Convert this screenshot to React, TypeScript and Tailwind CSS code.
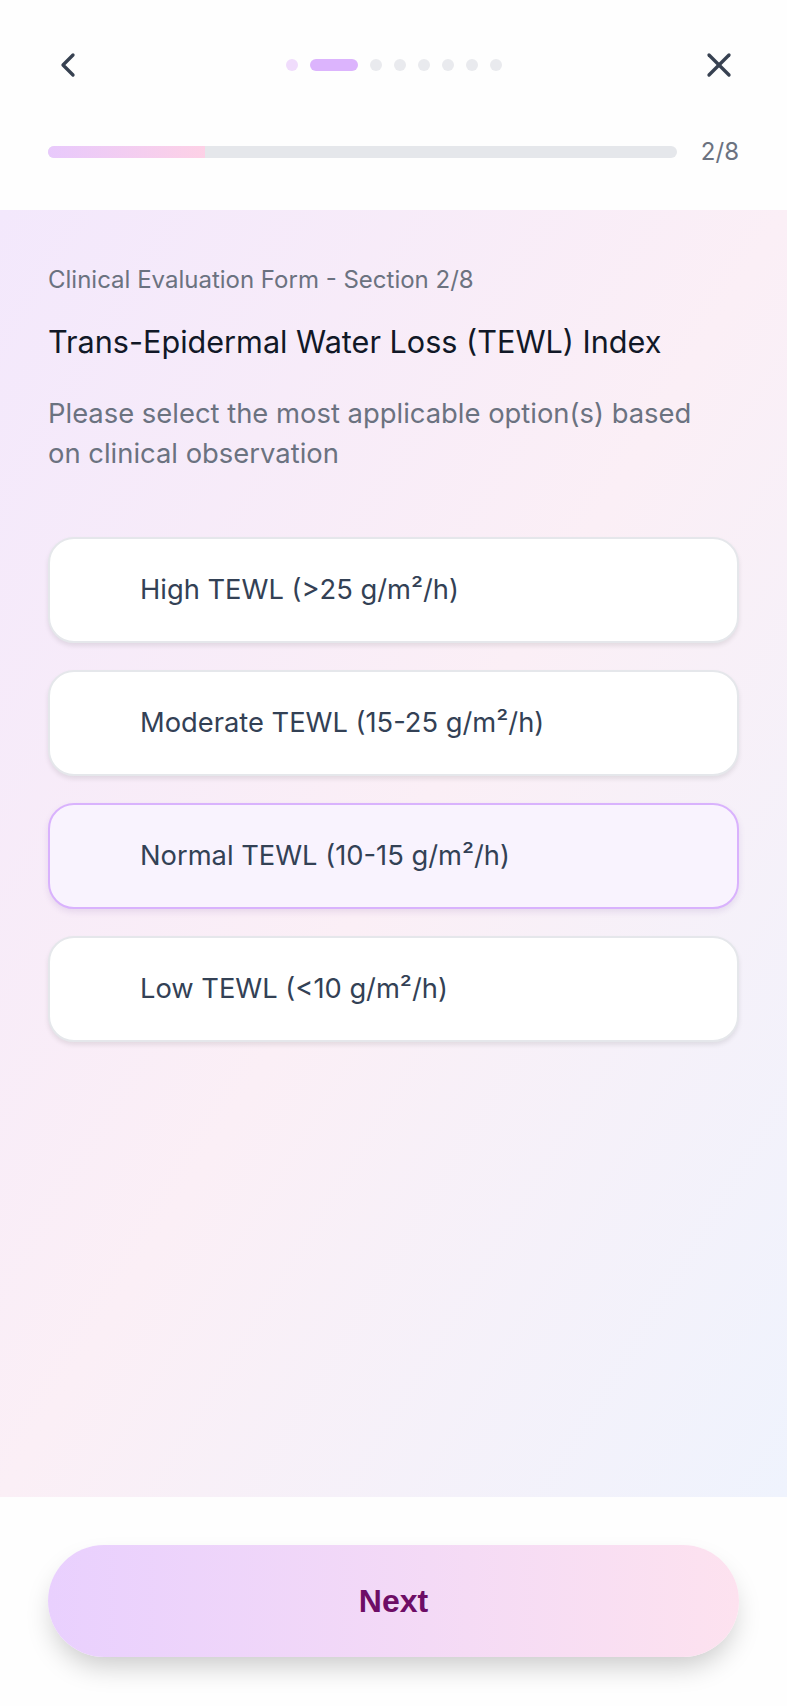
import { useState } from 'react';
import { ChevronLeft, X } from 'lucide-react';

const options = [
    'High TEWL (>25 g/m²/h)',
    'Moderate TEWL (15-25 g/m²/h)',
    'Normal TEWL (10-15 g/m²/h)',
    'Low TEWL (<10 g/m²/h)',
];

export default function App() {
    const [selected, setSelected] = useState<number>(2);
    const step = 2;
    const total = 8;

    return (
        <div className="w-full h-[1706px] flex flex-col font-['Inter',_'Noto_Sans',sans-serif] bg-white">
            {/* header */}
            <div className="h-[210px] shrink-0 bg-[#fefefe] px-12 pt-[45px]">
                <div className="h-10 flex items-center justify-between">
                    <button className="w-10 h-10 text-[#374151]">
                        <ChevronLeft size={40} strokeWidth={2} />
                    </button>
                    <div className="flex items-center gap-3">
                        {Array.from({ length: total }).map((_, i) => {
                            if (i === step - 1) {
                                return <div key={i} className="w-12 h-3 rounded-full bg-[#dcb4fd]" />;
                            }
                            return (
                                <div
                                    key={i}
                                    className={`w-3 h-3 rounded-full ${i < step - 1 ? 'bg-[#f0dcfc]' : 'bg-[#e9eaee]'}`}
                                />
                            );
                        })}
                    </div>
                    <button className="w-10 h-10 text-[#374151]">
                        <X size={40} strokeWidth={2} />
                    </button>
                </div>
                <div className="mt-[53px] h-7 flex items-center gap-6">
                    <div className="flex-1 h-3 rounded-full bg-[#e5e7eb] overflow-hidden">
                        <div
                            className="h-full bg-gradient-to-r from-[#e8c9fc] to-[#fdd1e6]"
                            style={{ width: `${(step / total) * 100}%` }}
                        />
                    </div>
                    <span className="text-[24px] leading-7 text-[#6b7280]">{step}/{total}</span>
                </div>
            </div>

            {/* body */}
            <div className="flex-1 bg-gradient-to-br from-[#f3e8fc] via-[#fbeff6] to-[#eff3fd] px-12 pt-[54px]">
                <p className="text-[24px] leading-8 text-[#6b7280]">Clinical Evaluation Form - Section 2/8</p>
                <h1 className="mt-[26px] text-[30.6px] leading-10 text-[#111827]">
                    Trans-Epidermal Water Loss (TEWL) Index
                </h1>
                <p className="mt-[31px] max-w-[660px] text-[27.4px] leading-10 text-[#6b7280]">
                    Please select the most applicable option(s) based on clinical observation
                </p>

                <div className="mt-16 flex flex-col gap-[27px]">
                    {options.map((opt, i) => (
                        <button
                            key={opt}
                            onClick={() => setSelected(i)}
                            className={`h-[106px] w-full flex items-center pl-[90px] rounded-[26px] border-2 text-left text-[27.3px] text-[#334155] ${selected === i
                                ? 'border-[#d9b2fd] bg-[#f9f3fe] shadow-[0_3px_6px_rgba(120,80,160,0.14)]'
                                : 'border-[#e5e7eb] bg-white shadow-[0_3px_5px_rgba(0,0,0,0.09)]'
                                }`}
                        >
                            {opt}
                        </button>
                    ))}
                </div>
            </div>

            {/* footer */}
            <div className="h-[209px] shrink-0 bg-[#fefefe] px-12 pt-12">
                <button className="w-full h-[112px] rounded-full bg-gradient-to-r from-[#e9d0fe] to-[#fde2ef] shadow-[0_14px_28px_-6px_rgba(0,0,0,0.22)] text-[32px] font-bold text-[#6e0d66] font-['Liberation_Sans',_Arial,sans-serif]">
                    Next
                </button>
            </div>
        </div>
    );
}
